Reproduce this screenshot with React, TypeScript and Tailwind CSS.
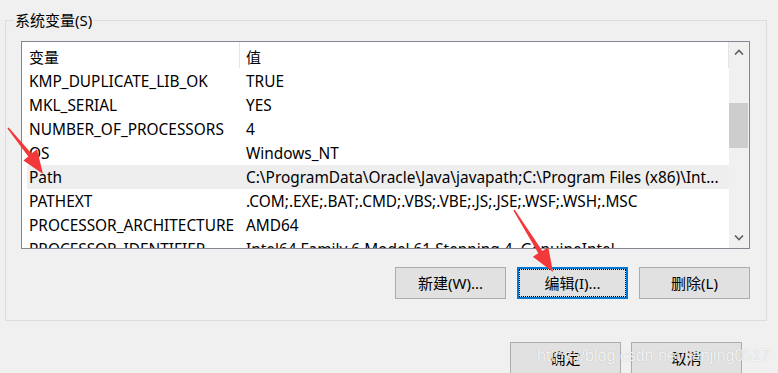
const ROWS = [
  { name: "KMP_DUPLICATE_LIB_OK", value: "TRUE" },
  { name: "MKL_SERIAL", value: "YES" },
  { name: "NUMBER_OF_PROCESSORS", value: "4" },
  { name: "OS", value: "Windows_NT" },
  {
    name: "Path",
    value: "C:\\ProgramData\\Oracle\\Java\\javapath;C:\\Program Files (x86)\\Int...",
    selected: true,
  },
  { name: "PATHEXT", value: ".COM;.EXE;.BAT;.CMD;.VBS;.VBE;.JS;.JSE;.WSF;.WSH;.MSC" },
  { name: "PROCESSOR_ARCHITECTURE", value: "AMD64" },
  { name: "PROCESSOR_IDENTIFIER", value: "Intel64 Family 6 Model 61 Stepping 4, GenuineIntel" },
];

function Chevron({ up }: { up?: boolean }) {
  return (
    <svg width="10" height="6" viewBox="0 0 10 6">
      <polyline
        points={up ? "1,5.5 5,1.5 9,5.5" : "1,0.5 5,4.5 9,0.5"}
        fill="none"
        stroke="#606060"
        strokeWidth="1.6"
      />
    </svg>
  );
}

function WinButton({ label, focused }: { label: string; focused?: boolean }) {
  if (focused) {
    return (
      <button className="w-[111px] h-[32px] border-2 border-[#0078d7] bg-[#e1e1e1] p-0">
        <div className="w-full h-full border border-dotted border-black flex items-center justify-center text-[15px] text-black">
          {label}
        </div>
      </button>
    );
  }
  return (
    <button className="w-[111px] h-[32px] border border-[#adadad] bg-[#e1e1e1] flex items-center justify-center text-[15px] text-black">
      {label}
    </button>
  );
}

export default function App() {
  return (
    <div
      className="relative w-[778px] h-[373px] overflow-hidden bg-[#f0f0f0] text-black"
      style={{ fontFamily: '"Noto Sans", "Noto Sans CJK SC", sans-serif' }}
    >
      {/* 系统变量 group */}
      <fieldset className="ml-[5px] mt-[10px] w-[762px] border border-[#dcdcdc] pl-[8px] pt-[11px] pb-[21px]">
        <legend className="px-[1px] text-[15px] leading-[20px]">系统变量(S)</legend>
        <div className="ml-[7px] w-[729px]">
          {/* list view */}
          <div className="h-[208px] border border-[#828790] bg-white flex overflow-hidden">
            <div className="flex-1 pl-[5px] overflow-hidden text-[15.4px] leading-[20px]">
              <div className="grid grid-cols-[217px_1fr] h-[27px]">
                <div className="w-[213px] h-[26px] border-r border-[#e5e5e5] flex items-center pl-[2px] pt-[3px] text-[15px]">
                  变量
                </div>
                <div className="h-[26px] border-r border-[#e5e5e5] flex items-center pl-[2px] pt-[3px] text-[15px]">
                  值
                </div>
              </div>
              {ROWS.map((r) => (
                <div
                  key={r.name}
                  className={
                    "grid grid-cols-[217px_1fr] h-[24px] pt-[1px] items-center whitespace-nowrap " +
                    (r.selected ? "bg-[#eeeeee]" : "")
                  }
                >
                  <div className="pl-[2px] overflow-hidden">{r.name}</div>
                  <div className="pl-[2px] overflow-hidden">{r.value}</div>
                </div>
              ))}
            </div>
            {/* scrollbar */}
            <div className="w-[20px] bg-[#f0f0f0] flex flex-col">
              <div className="h-[20px] flex items-center justify-center">
                <Chevron up />
              </div>
              <div className="flex-1">
                <div className="mt-[41px] h-[45px] w-[19px] bg-[#cdcdcd]" />
              </div>
              <div className="h-[20px] flex items-center justify-center">
                <Chevron />
              </div>
            </div>
          </div>

          <div className="mt-[18px] flex justify-end gap-[11px]">
            <WinButton label="新建(W)..." />
            <WinButton label="编辑(I)..." focused />
            <WinButton label="删除(L)" />
          </div>
        </div>
      </fieldset>

      <div className="mt-[21px] flex justify-end gap-[10px] pr-[36px]">
        <WinButton label="确定" />
        <WinButton label="取消" />
      </div>

      {/* watermark */}
      <div
        className="absolute left-[537px] top-[344px] text-[16px] text-white/85 [text-shadow:0_0_1px_rgba(0,0,0,0.25)] pointer-events-none"
        style={{ fontFamily: '"Liberation Sans", sans-serif' }}
      >
        https://blog.csdn.net/lianjing0517
      </div>

      {/* annotation arrows */}
      <svg className="absolute inset-0 pointer-events-none" width="778" height="373">
        <polygon
          points="8.6,127.5 31.5,153.5 37.0,149.3 43,174 23.4,160.4 28.3,156.5 7.4,128.5"
          fill="#f2383a"
        />
        <polygon
          points="514.6,209.6 542.4,251.0 548.3,247.3 553,272 532.8,256.7 538.3,253.3 513.4,210.4"
          fill="#f2383a"
        />
      </svg>
    </div>
  );
}
